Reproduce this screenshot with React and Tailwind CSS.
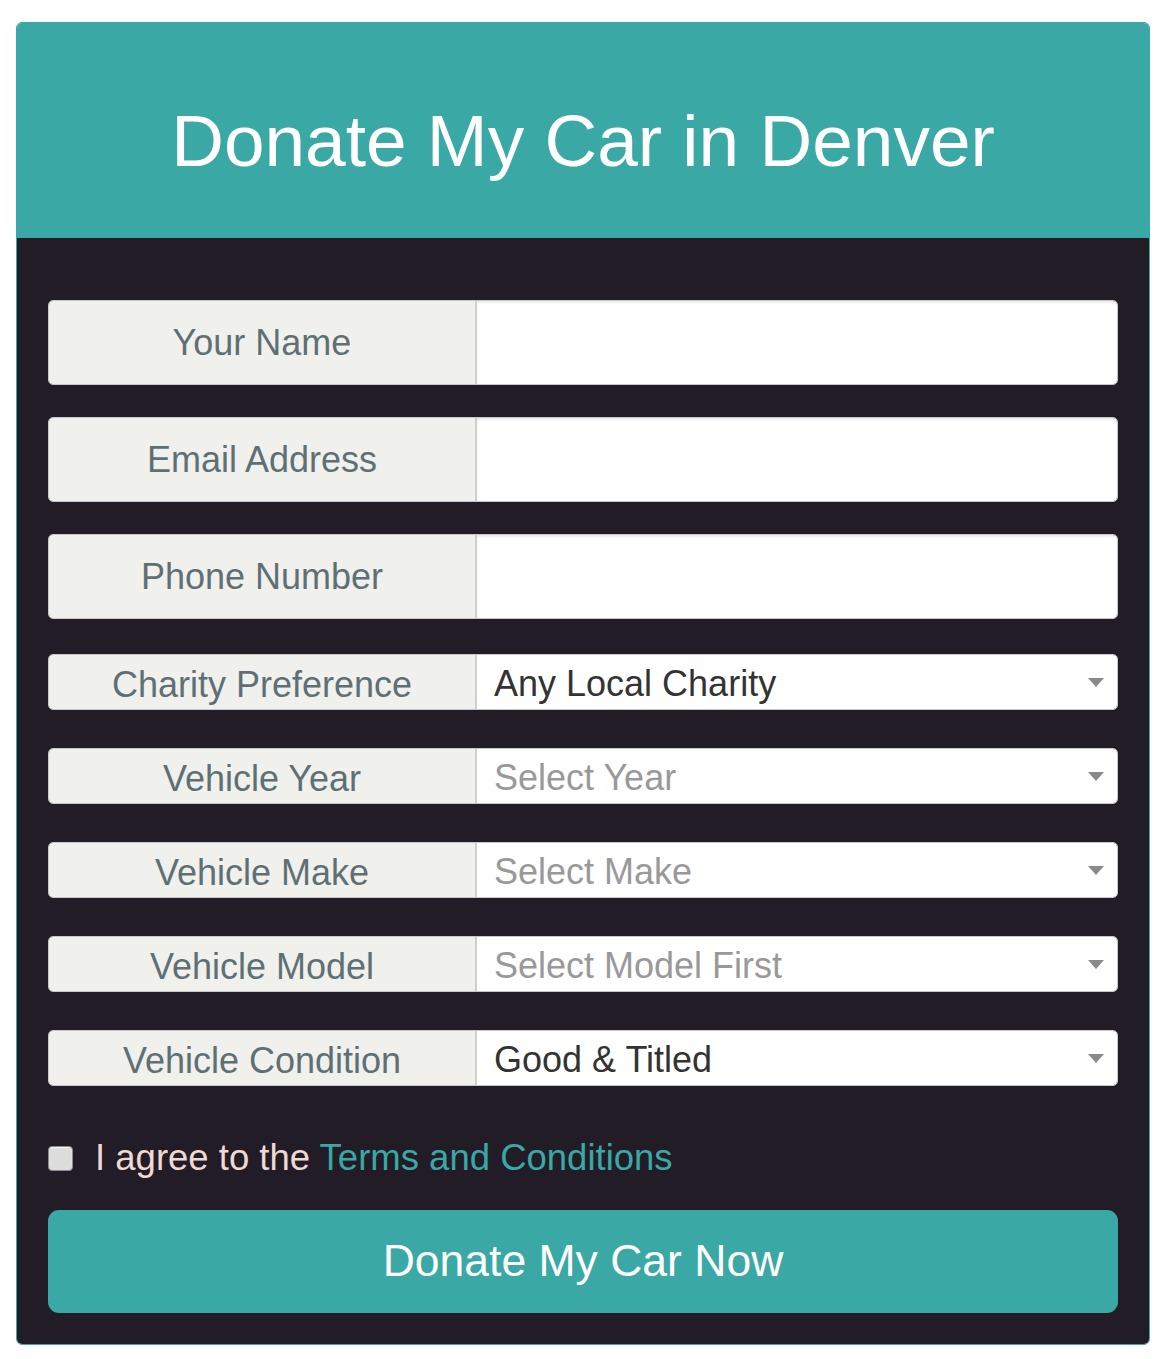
import React from 'react';

const textFields = ['Your Name', 'Email Address', 'Phone Number'];

const selectFields = [
  { label: 'Charity Preference', value: 'Any Local Charity', placeholder: false },
  { label: 'Vehicle Year', value: 'Select Year', placeholder: true },
  { label: 'Vehicle Make', value: 'Select Make', placeholder: true },
  { label: 'Vehicle Model', value: 'Select Model First', placeholder: true },
  { label: 'Vehicle Condition', value: 'Good & Titled', placeholder: false },
];

const Caret = () => (
  <svg width="16" height="9" viewBox="0 0 16 9" className="shrink-0">
    <path d="M0 0 L16 0 L8 9 Z" fill="#8a8a8a" />
  </svg>
);

const TextRow = ({ label }) => (
  <div className="flex h-[85px] rounded-[5px] border border-[#c8c8c8] shadow-[inset_0_2px_2px_rgba(0,0,0,0.12)] overflow-hidden">
    <div className="w-[428px] shrink-0 flex items-center justify-center bg-[#f0f0ec] border-r-2 border-[#cfcfcc] text-[36px] leading-none text-[#5f7075]">
      {label}
    </div>
    <input type="text" className="flex-1 bg-white outline-none shadow-[inset_0_2px_2px_rgba(0,0,0,0.08)]" />
  </div>
);

const SelectRow = ({ label, value, placeholder }) => (
  <div className="flex h-[56px] rounded-[5px] border border-[#c8c8c8] overflow-hidden">
    <div className="w-[428px] shrink-0 flex items-center justify-center bg-[#f0f0ec] border-r-2 border-[#cfcfcc] text-[36px] text-[#5f7075] leading-none pt-[6px]">
      {label}
    </div>
    <div className="flex-1 bg-white flex items-center pl-[17px] pr-[13px]">
      <span className={`flex-1 text-[36px] leading-none pt-[4px] ${placeholder ? 'text-[#999999]' : 'text-[#333333]'}`}>
        {value}
      </span>
      <Caret />
    </div>
  </div>
);

export default function App() {
  return (
    <div className="bg-white min-h-screen pt-[22px] pl-4 pr-[20px] font-['Liberation_Sans',Arial,sans-serif]">
      <div className="w-[1134px] rounded-[6px] border border-[#3aa8a4] overflow-hidden">
        <div className="h-[215px] bg-[#3aa8a4] flex items-center justify-center">
          <h1 className="text-white text-[73px] leading-none pt-[20px]">Donate My Car in Denver</h1>
        </div>
        <div className="bg-[#221c27] px-[31px] pt-[62px] pb-[31px]">
          <div className="flex flex-col gap-8">
            {textFields.map((f) => (
              <TextRow key={f} label={f} />
            ))}
          </div>
          <div className="flex flex-col gap-[38px] mt-[35px]">
            {selectFields.map((f) => (
              <SelectRow key={f.label} {...f} />
            ))}
          </div>
          <label className="flex items-center mt-[54px] gap-[22px]">
            <span className="w-[25px] h-[25px] rounded-[4px] bg-[#dcdcdc] border border-[#8a8a8a] shadow-[inset_0_1px_1px_rgba(255,255,255,0.8)] shrink-0" />
            <span className="text-[36.5px] leading-none text-[#efd9d3]">
              I agree to the <span className="text-[#3aa8a4]">Terms and Conditions</span>
            </span>
          </label>
          <button className="mt-[33px] w-full h-[103px] rounded-[11px] bg-[#3aa8a4] text-white text-[44.5px] leading-none">
            Donate My Car Now
          </button>
        </div>
      </div>
    </div>
  );
}
